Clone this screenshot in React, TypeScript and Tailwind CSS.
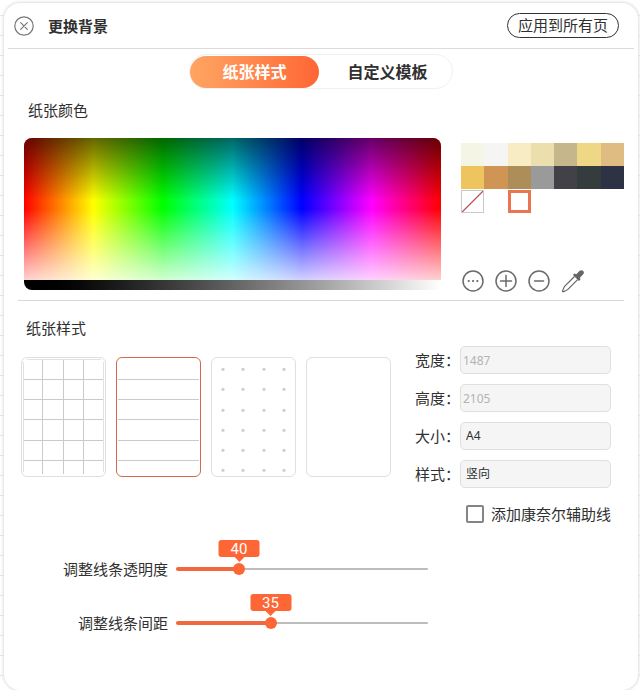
import { useState, type ReactNode } from "react"

const swatches = [
  "#f5f5e6", "#f5f5f3", "#f8ecc4", "#ebdfae", "#c5b68c", "#eed785", "#dfbd82",
  "#eec45f", "#cf9555", "#ad8d58", "#9b9a9a", "#424147", "#343c3e", "#2d3244",
]

const HUES = "linear-gradient(to right, #f00, #ff0, #0f0, #0ff, #00f, #f0f, #f00)"
const SHADE =
  "linear-gradient(to bottom, rgba(0,0,0,0.6), rgba(0,0,0,0) 44%, rgba(255,255,255,0) 50%, rgba(255,255,255,0.82))"

const rows = [21, 41, 61, 82, 102]
const cols = [20, 41, 61]
const dots = [11, 31, 52, 72, 92, 112]

const paperStyles = [
  {
    id: "grid",
    label: "方格",
    art: (
      <>
        {rows.map((y) => <path key={y} d={`M2 ${y + 0.5}H82`} />)}
        {cols.map((x) => <path key={x} d={`M${x + 0.5} 2V116`} />)}
        <path d="M1.5 4V114M81.5 4V114M5 1.5H79" stroke="#e2e2e2" />
      </>
    ),
  },
  {
    id: "line",
    label: "横线",
    art: <>{rows.map((y) => <path key={y} d={`M1 ${y + 0.5}H82`} />)}</>,
  },
  {
    id: "dot",
    label: "点阵",
    art: (
      <>
        {dots.map((y) =>
          dots.slice(0, 4).map((x) => (
            <circle key={`${x}-${y}`} cx={x} cy={y + 0.3} r="1.6" fill="#cfcfcf" stroke="none" />
          ))
        )}
      </>
    ),
  },
  { id: "blank", label: "空白", art: null },
]

function CircleIcon({ children }: { children: ReactNode }) {
  return (
    <svg viewBox="0 0 22 22" className="size-[22px]" fill="none" stroke="#6b6b6b" strokeWidth="1.5" strokeLinecap="round">
      <circle cx="11" cy="11" r="10" />
      {children}
    </svg>
  )
}

function Field({ id, label, children }: { id: string; label: string; children: ReactNode }) {
  return (
    <div className="flex items-center">
      <label htmlFor={id} className="w-[45px] shrink-0 whitespace-nowrap">{label}：</label>
      {children}
    </div>
  )
}

type SliderProps = { id: string; label: string; min: number; max: number; initial: number }

function Slider({ id, label, min, max, initial }: SliderProps) {
  const [value, setValue] = useState(initial)
  const percent = ((value - min) / (max - min)) * 100

  return (
    <div className="flex items-center gap-2">
      <label htmlFor={id} className="w-[147px] text-right">{label}</label>
      <div className="relative flex h-6 w-[42%] items-center">
        <div className="h-0.5 w-full rounded-full bg-[#bdbdbd]" />
        <div className="absolute left-0 h-1 rounded-full bg-[#f1683e]" style={{ width: `${percent}%` }} />
        <input
          id={id}
          type="range"
          min={min}
          max={max}
          value={value}
          onChange={(e) => setValue(Number(e.target.value))}
          className="absolute -inset-x-1.5 h-6 cursor-pointer appearance-none bg-transparent [&::-webkit-slider-thumb]:size-3 [&::-webkit-slider-thumb]:appearance-none [&::-webkit-slider-thumb]:rounded-full [&::-webkit-slider-thumb]:bg-[#ff6636]"
        />
        <output
          htmlFor={id}
          className="absolute bottom-6 flex h-[17px] w-[41px] -translate-x-1/2 items-center justify-center rounded-[3px] bg-[#ff6636] font-['Roboto',sans-serif] text-white"
          style={{ left: `${percent}%` }}
        >
          {value}
          <svg viewBox="0 0 10 5" className="absolute top-full h-[5px] w-2.5" fill="#ff6636">
            <path d="M0 0H10L5 5Z" />
          </svg>
        </output>
      </div>
    </div>
  )
}

export default function App() {
  const [paper, setPaper] = useState("line")

  const inputClass =
    "h-7 w-full min-w-0 appearance-none rounded-[5px] border border-[#dfdfdf] bg-[#f5f5f5] text-[12px]"

  return (
    <div className="min-h-screen bg-white bg-[repeating-linear-gradient(to_bottom,transparent_0px,transparent_15px,#e6e6e6_15px,#e6e6e6_16px,transparent_16px,transparent_20px)] pt-[3px] pr-0.5 pl-1 font-['Noto_Sans','Noto_Sans_CJK_SC',sans-serif] text-[15px] leading-5 text-[#303030]">
      <main className="min-h-[687px] rounded-2xl bg-white shadow-[0_0_3px_1px_#dedede]">
        <header className="mx-1 flex h-[46px] items-center border-b border-[#dcdcdc] pr-[15px] pl-1.5">
          <button aria-label="关闭">
            <svg viewBox="0 0 20 20" className="size-5" fill="none" stroke="#777" strokeWidth="1.2" strokeLinecap="round">
              <circle cx="10" cy="10" r="9.2" />
              <path d="M6.7 6.7L13.3 13.3M13.3 6.7L6.7 13.3" />
            </svg>
          </button>
          <h1 className="ml-3.5 font-bold">更换背景</h1>
          <button className="ml-auto h-[25px] rounded-full border border-[#333] px-2.5 leading-none">应用到所有页</button>
        </header>

        <nav className="mx-auto mt-[5px] flex h-[35px] w-[264px] items-center rounded-full border border-[#f1f1f1] text-[16px] font-bold">
          <button className="h-8 w-[129px] rounded-full bg-linear-to-r from-[#ffa562] to-[#ff6535] text-white">纸张样式</button>
          <button className="flex-1 pl-1">自定义模板</button>
        </nav>

        <section className="mx-3.5 border-b border-[#d8d8d8] pt-[11px] pb-2.5">
          <h2 className="ml-2.5">纸张颜色</h2>
          <div className="mt-[18px] flex gap-5 pl-1.5">
            <div className="h-[152px] flex-1 overflow-hidden rounded-lg">
              <div className="h-[142px]" style={{ background: `${SHADE}, ${HUES}` }} />
              <div className="h-2.5 bg-linear-to-r from-black to-white" />
            </div>
            <div className="flex w-[163px] flex-col justify-between pt-[5px]">
              <div>
                <div className="grid grid-cols-7">
                  {swatches.map((color) => (
                    <button key={color} aria-label={color} className="h-[23px]" style={{ backgroundColor: color }} />
                  ))}
                </div>
                <div className="grid grid-cols-7 pt-px">
                  <button aria-label="无颜色" className="h-[23px] border border-[#c9c9c9]">
                    <svg viewBox="0 0 22 22" className="size-full" stroke="#b5504a" strokeWidth="1.3">
                      <path d="M0 22L22 0" />
                    </svg>
                  </button>
                  <button aria-label="白色" className="col-start-3 h-[23px] border-[3px] border-[#ea7550] bg-white" />
                </div>
              </div>
              <div className="-mb-[3px] flex items-center gap-[11px] pl-px">
                <button aria-label="更多">
                  <CircleIcon>
                    <path d="M6.7 11h.1M11 11h.1M15.3 11h.1" strokeWidth="2.2" />
                  </CircleIcon>
                </button>
                <button aria-label="添加颜色">
                  <CircleIcon>
                    <path d="M5.5 11h11M11 5.5v11" />
                  </CircleIcon>
                </button>
                <button aria-label="删除颜色">
                  <CircleIcon>
                    <path d="M6.5 11h9" />
                  </CircleIcon>
                </button>
                <button aria-label="吸管取色">
                  <svg viewBox="0 0 24 24" className="size-6" fill="none" stroke="#666" strokeWidth="1.2" strokeLinejoin="round">
                    <path d="M13.5 7.5L3.8 17.2C2.7 18.4 2.3 20.4 1.6 21.7C1.2 22.5 1.7 22.9 2.4 22.6C3.8 22.1 5.6 21.7 6.9 20.4L16.6 10.6" />
                    <path d="M12 6.1L13.6 4.6L15.3 5.3L18.4 2.1C19.6 .9 21.2 .9 22.2 1.9C23.2 2.9 23.1 4.5 22 5.6L18.9 8.8L19.5 10.4L18 11.9Z" fill="#666" stroke="none" />
                  </svg>
                </button>
              </div>
            </div>
          </div>
        </section>

        <section className="px-[17px] pt-[17px]">
          <h2 className="ml-[5px]">纸张样式</h2>
          <div className="mt-2 flex items-start justify-between pr-2.5">
            <div className="mt-[11px] flex gap-2.5">
              {paperStyles.map(({ id, label, art }) => (
                <button
                  key={id}
                  aria-label={label}
                  aria-pressed={paper === id}
                  onClick={() => setPaper(id)}
                  className={`h-[120px] w-[85px] rounded-md border ${paper === id ? "border-[#d2694a]" : "border-[#dfdfdf]"}`}
                >
                  <svg viewBox="0 0 83 118" className="size-full" fill="none" stroke="#cacaca">{art}</svg>
                </button>
              ))}
            </div>

            <form className="flex w-[196px] flex-col gap-2.5">
              <Field id="width" label="宽度">
                <input id="width" className={`${inputClass} px-0.5 text-[#b3b3b3]`} defaultValue="1487" disabled />
              </Field>
              <Field id="height" label="高度">
                <input id="height" className={`${inputClass} px-0.5 text-[#b3b3b3]`} defaultValue="2105" disabled />
              </Field>
              <Field id="size" label="大小">
                <select id="size" className={`${inputClass} px-[5px]`} defaultValue="A4">
                  <option>A4</option>
                  <option>A5</option>
                </select>
              </Field>
              <Field id="orientation" label="样式">
                <select id="orientation" className={`${inputClass} px-[5px]`} defaultValue="竖向">
                  <option>竖向</option>
                  <option>横向</option>
                </select>
              </Field>
              <label className="mt-1.5 flex items-center justify-end gap-[7px] whitespace-nowrap">
                <input type="checkbox" className="size-[18px] shrink-0 appearance-none rounded-[2px] border-2 border-[#858585] checked:bg-[#ff6636]" />
                添加康奈尔辅助线
              </label>
            </form>
          </div>

          <div className="mt-[33px] flex flex-col gap-[30px]">
            <Slider id="opacity" label="调整线条透明度" min={20} max={100} initial={40} />
            <Slider id="spacing" label="调整线条间距" min={20} max={60} initial={35} />
          </div>
        </section>
      </main>
    </div>
  )
}
